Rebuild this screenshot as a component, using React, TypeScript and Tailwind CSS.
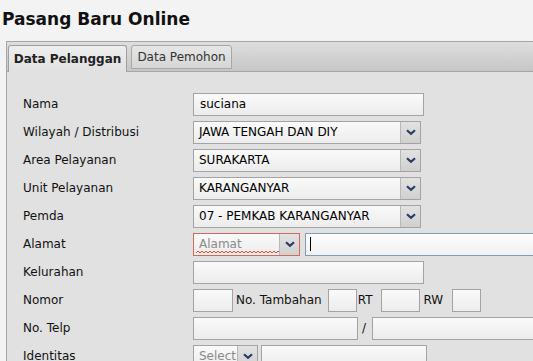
import React from 'react';

const font = { fontFamily: '"DejaVu Sans", Verdana, sans-serif' };

const inputCls =
  'h-[23px] border border-[#a3a3a3] bg-gradient-to-b from-[#fafafa] to-[#ececec] px-[6px] text-[12px] leading-[21px] text-black';

const Chevron: React.FC = () => (
  <svg width="10" height="7" viewBox="0 0 10 7">
    <path d="M1 1.2 L5 4.8 L9 1.2" fill="none" stroke="#2b3a67" strokeWidth="2.2" />
  </svg>
);

// red squiggle used by the invalid Alamat field
const Squiggle: React.FC = () => (
  <svg className="absolute bottom-[1px] left-[2px]" width="84" height="4" viewBox="0 0 84 4">
    <path
      d="M0 3 L2 1 L4 3 L6 1 L8 3 L10 1 L12 3 L14 1 L16 3 L18 1 L20 3 L22 1 L24 3 L26 1 L28 3 L30 1 L32 3 L34 1 L36 3 L38 1 L40 3 L42 1 L44 3 L46 1 L48 3 L50 1 L52 3 L54 1 L56 3 L58 1 L60 3 L62 1 L64 3 L66 1 L68 3 L70 1 L72 3 L74 1 L76 3 L78 1 L80 3 L82 1 L84 3"
      fill="none"
      stroke="#d44a3a"
      strokeWidth="1"
    />
  </svg>
);

const SelectBox: React.FC<{ value: string; className: string; muted?: boolean; red?: boolean }> = ({
  value,
  className,
  muted,
  red,
}) => (
  <div
    className={`flex h-[23px] items-stretch border bg-gradient-to-b from-[#fafafa] to-[#ececec] ${
      red ? 'border-[#d06a5a]' : 'border-[#a3a3a3]'
    } ${className}`}
  >
    <div
      className={`relative flex-1 overflow-hidden whitespace-nowrap px-[5px] text-[12px] leading-[21px] ${
        muted ? 'text-[#8a8a8a]' : 'text-black'
      }`}
    >
      {value}
      {red && <Squiggle />}
    </div>
    <div className="flex w-[20px] items-center justify-center border-l border-[#b8b8b8] bg-gradient-to-b from-[#e2e2e2] to-[#d0d0d0]">
      <Chevron />
    </div>
  </div>
);

const Row: React.FC<{ label: string; children: React.ReactNode }> = ({ label, children }) => (
  <div className="flex h-[28px] items-center">
    <div className="w-[186px] shrink-0 pl-[16px] text-[12px] text-[#111]">{label}</div>
    <div className="flex items-center">{children}</div>
  </div>
);

export default function App() {
  return (
    <div className="h-[361px] w-[533px] overflow-hidden bg-[#f3f3f3]" style={font}>
      <h1 className="pl-[2px] pt-[8px] text-[17px] font-bold leading-[22px] text-[#111]">Pasang Baru Online</h1>
      <div className="ml-[6px] mt-[11px] w-[600px] border-l border-t border-[#a6a6a6]">
        <div className="flex h-[30px] items-end gap-[4px] border-b border-[#a6a6a6] bg-gradient-to-b from-[#dedede] to-[#c6c6c6] pl-[1px]">
          <div className="-mb-px flex h-[27px] w-[119px] items-center justify-center rounded-t-[3px] border border-b-0 border-[#a0a0a0] bg-gradient-to-b from-[#eeeeee] to-[#e1e1e1] text-[12px] font-bold text-[#222]">
            Data Pelanggan
          </div>
          <div className="mb-[2px] flex h-[24px] w-[101px] items-center justify-center rounded-t-[3px] border border-[#a8a8a8] bg-gradient-to-b from-[#e6e6e6] to-[#d6d6d6] text-[12px] text-[#333]">
            Data Pemohon
          </div>
        </div>
        <div className="h-[300px] bg-[#e1e1e1] pt-[18px]">
          <Row label="Nama">
            <div className={`${inputCls} w-[231px]`}>suciana</div>
          </Row>
          <Row label="Wilayah / Distribusi">
            <SelectBox value="JAWA TENGAH DAN DIY" className="w-[228px]" />
          </Row>
          <Row label="Area Pelayanan">
            <SelectBox value="SURAKARTA" className="w-[228px]" />
          </Row>
          <Row label="Unit Pelayanan">
            <SelectBox value="KARANGANYAR" className="w-[228px]" />
          </Row>
          <Row label="Pemda">
            <SelectBox value="07 - PEMKAB KARANGANYAR" className="w-[228px]" />
          </Row>
          <Row label="Alamat">
            <SelectBox value="Alamat" className="w-[107px]" muted red />
            <div className="ml-[5px] flex h-[23px] w-[260px] items-center border border-[#7f9db9] bg-gradient-to-b from-[#fdfdfd] to-[#f1f1f1] pl-[4px]">
              <div className="h-[14px] w-px bg-black" />
            </div>
          </Row>
          <Row label="Kelurahan">
            <div className={`${inputCls} w-[231px]`} />
          </Row>
          <Row label="Nomor">
            <div className={`${inputCls} w-[40px]`} />
            <span className="ml-[3px] mr-[6px] text-[12px] text-[#111]">No. Tambahan</span>
            <div className={`${inputCls} w-[29px]`} />
            <span className="ml-[1px] mr-[9px] text-[12px] text-[#111]">RT</span>
            <div className={`${inputCls} w-[39px]`} />
            <span className="ml-[3px] mr-[9px] text-[12px] text-[#111]">RW</span>
            <div className={`${inputCls} w-[29px]`} />
          </Row>
          <Row label="No. Telp">
            <div className={`${inputCls} w-[165px]`} />
            <span className="mx-[4px] w-[6px] text-[12px] text-[#111]">/</span>
            <div className={`${inputCls} w-[200px]`} />
          </Row>
          <Row label="Identitas">
            <SelectBox value="Select" className="w-[65px]" muted />
            <div className={`${inputCls} ml-[3px] w-[166px]`} />
          </Row>
        </div>
      </div>
    </div>
  );
}
